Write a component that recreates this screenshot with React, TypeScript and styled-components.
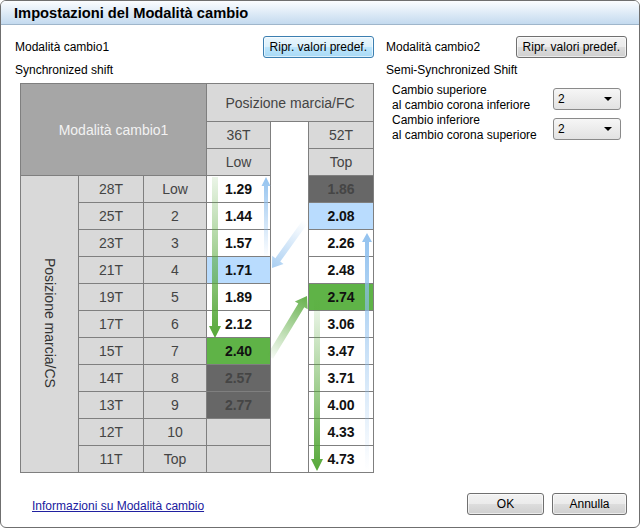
import styled, { createGlobalStyle } from 'styled-components'

type Tone = 'plain' | 'grey' | 'dark' | 'blue' | 'green' | 'head'

type Value = { v?: string; tone?: Tone }

type Row = { gear: string; idx: string; a: Value; b: Value }

const rows: Row[] = [
    { gear: '28T', idx: 'Low', a: { v: '1.29' }, b: { v: '1.86', tone: 'dark' } },
    { gear: '25T', idx: '2', a: { v: '1.44' }, b: { v: '2.08', tone: 'blue' } },
    { gear: '23T', idx: '3', a: { v: '1.57' }, b: { v: '2.26' } },
    { gear: '21T', idx: '4', a: { v: '1.71', tone: 'blue' }, b: { v: '2.48' } },
    { gear: '19T', idx: '5', a: { v: '1.89' }, b: { v: '2.74', tone: 'green' } },
    { gear: '17T', idx: '6', a: { v: '2.12' }, b: { v: '3.06' } },
    { gear: '15T', idx: '7', a: { v: '2.40', tone: 'green' }, b: { v: '3.47' } },
    { gear: '14T', idx: '8', a: { v: '2.57', tone: 'dark' }, b: { v: '3.71' } },
    { gear: '13T', idx: '9', a: { v: '2.77', tone: 'dark' }, b: { v: '4.00' } },
    { gear: '12T', idx: '10', a: { tone: 'grey' }, b: { v: '4.33' } },
    { gear: '11T', idx: 'Top', a: { tone: 'grey' }, b: { v: '4.73' } },
]

const GlobalStyle = createGlobalStyle`
    html, body {
        margin: 0;
        padding: 0;
        background: #fff;
    }
    body {
        font-family: 'Liberation Sans', Arial, sans-serif;
    }
`

const Window = styled.div`
    width: 640px;
    height: 528px;
    box-sizing: border-box;
    border: 1px solid #6f6f6f;
    border-radius: 6px;
    overflow: hidden;
    display: flex;
    flex-direction: column;
    background: #fff;
`

const TitleBar = styled.div`
    height: 23px;
    flex: none;
    display: flex;
    align-items: center;
    padding-left: 13px;
    background: linear-gradient(#fbfdff, #c4daef);
    border-bottom: 1px solid #9fb6cb;
    font-weight: bold;
    font-size: 14.7px;
    color: #000;
`

const Body = styled.div`
    flex: 1;
    display: flex;
    gap: 11px;
    padding: 11px 12px 0 13px;
`

const Panel = styled.div<{ $w: number }>`
    width: ${(p) => p.$w}px;
    display: flex;
    flex-direction: column;
`

const PanelHead = styled.div`
    display: flex;
    align-items: center;
    justify-content: space-between;
    height: 22px;
    font-size: 12px;
    padding-left: 1px;
`

const Subtitle = styled.div`
    font-size: 12px;
    line-height: 14px;
    margin-top: 5px;
    padding-left: 1px;
`

const Button = styled.button<{ $focus?: boolean; $w?: number }>`
    height: 22px;
    width: ${(p) => (p.$w ? `${p.$w}px` : 'auto')};
    padding: 0 6px;
    font-family: inherit;
    font-size: 12px;
    color: #000;
    border-radius: 3px;
    border: 1px solid ${(p) => (p.$focus ? '#3c7fb1' : '#707070')};
    background: ${(p) =>
        p.$focus
            ? 'linear-gradient(#eaf6fd 0%, #d9f0fc 50%, #bee6fd 51%, #a7d9f5 100%)'
            : 'linear-gradient(#f2f2f2 0%, #ebebeb 50%, #dddddd 51%, #cfcfcf 100%)'};
    box-shadow: inset 0 0 0 1px rgba(255, 255, 255, 0.6);
`

const TableWrap = styled.div`
    position: relative;
    margin: 6px 0 0 6px;
    width: 353px;
`

const Grid = styled.table`
    border-collapse: collapse;
    table-layout: fixed;
    width: 353px;
    font-size: 14px;
    color: #444;
`

const Col = styled.col<{ $w: number }>`
    width: ${(p) => p.$w}px;
`

const toneBg: Record<Tone, string> = {
    plain: '#ffffff',
    grey: '#d9d9d9',
    dark: '#676767',
    blue: '#b9dcfe',
    green: '#5fb347',
    head: '#a6a6a6',
}

const Cell = styled.td<{ $tone?: Tone; $h?: number }>`
    border: 1px solid #7f7f7f;
    height: ${(p) => p.$h ?? 26}px;
    padding: 0;
    text-align: center;
    vertical-align: middle;
    background: ${(p) => toneBg[p.$tone ?? 'grey']};
    color: ${(p) => (p.$tone === 'head' ? '#f2f2f2' : '#444')};
`

const ValueCell = styled(Cell)`
    font-weight: bold;
    color: ${(p) => (p.$tone === 'dark' ? '#454545' : '#111')};
`

const GapCell = styled.td`
    border: none;
    border-bottom: 1px solid #7f7f7f;
    background: #fff;
    padding: 0;
`

const VerticalLabel = styled.span`
    display: inline-block;
    writing-mode: vertical-rl;
    color: #333;
`

const Overlay = styled.svg`
    position: absolute;
    left: 0;
    top: 0;
    pointer-events: none;
`

const Options = styled.div`
    display: flex;
    flex-direction: column;
    margin-top: 6px;
    padding: 0 6px 0 7px;
`

const OptionRow = styled.div`
    display: flex;
    align-items: center;
    justify-content: space-between;
    height: 30px;
`

const OptionLabel = styled.div`
    font-size: 12px;
    line-height: 15px;
    color: #000;
`

const SelectBox = styled.div`
    width: 68px;
    height: 22px;
    margin-top: 2px;
    border: 1px solid #8a8a8a;
    border-radius: 3px;
    background: linear-gradient(#f6f6f6, #e2e2e2);
    display: flex;
    align-items: center;
    justify-content: space-between;
    padding: 0 8px 0 4px;
    box-sizing: border-box;
    font-size: 12px;
`

const Caret = styled.span`
    width: 0;
    height: 0;
    border-left: 4px solid transparent;
    border-right: 4px solid transparent;
    border-top: 4px solid #000;
`

const Footer = styled.div`
    flex: none;
    display: flex;
    align-items: center;
    justify-content: space-between;
    padding: 0 12px 12px 31px;
`

const InfoLink = styled.a`
    font-size: 12px;
    color: #2020a0;
    text-decoration: underline;
    margin-top: 4px;
`

const Actions = styled.div`
    display: flex;
    gap: 8px;
`

type ArrowProps = {
    id: string
    x1: number
    y1: number
    x2: number
    y2: number
    shaft: number
    head: number
    headLen: number
    color: string
    from: number
    to: number
}

const Arrow = ({ id, x1, y1, x2, y2, shaft, head, headLen, color, from, to }: ArrowProps) => {
    const len = Math.hypot(x2 - x1, y2 - y1)
    const ang = (Math.atan2(y2 - y1, x2 - x1) * 180) / Math.PI
    const s = shaft / 2
    const h = head / 2
    const b = len - headLen
    const pts = `0,${-s} ${b},${-s} ${b},${-h} ${len},0 ${b},${h} ${b},${s} 0,${s}`
    return (
        <g transform={`translate(${x1} ${y1}) rotate(${ang})`}>
            <defs>
                <linearGradient id={id} gradientUnits="userSpaceOnUse" x1="0" y1="0" x2={len} y2="0">
                    <stop offset="0" stopColor={color} stopOpacity={from} />
                    <stop offset="1" stopColor={color} stopOpacity={to} />
                </linearGradient>
            </defs>
            <polygon points={pts} fill={`url(#${id})`} />
        </g>
    )
}

const blue = '#8dbfee'
const green = '#55a838'

const ShiftTable = () => (
    <TableWrap>
        <Grid>
            <colgroup>
                <Col $w={58} />
                <Col $w={65} />
                <Col $w={63} />
                <Col $w={64} />
                <Col $w={38} />
                <Col $w={65} />
            </colgroup>
            <tbody>
                <tr>
                    <Cell colSpan={3} rowSpan={3} $tone="head">
                        Modalità cambio1
                    </Cell>
                    <Cell colSpan={3} $h={37}>
                        Posizione marcia/FC
                    </Cell>
                </tr>
                <tr>
                    <Cell>36T</Cell>
                    <GapCell rowSpan={13} />
                    <Cell>52T</Cell>
                </tr>
                <tr>
                    <Cell>Low</Cell>
                    <Cell>Top</Cell>
                </tr>
                {rows.map((r, i) => (
                    <tr key={r.gear}>
                        {i === 0 && (
                            <Cell rowSpan={rows.length}>
                                <VerticalLabel>Posizione marcia/CS</VerticalLabel>
                            </Cell>
                        )}
                        <Cell>{r.gear}</Cell>
                        <Cell>{r.idx}</Cell>
                        <ValueCell $tone={r.a.tone ?? 'plain'}>{r.a.v}</ValueCell>
                        <ValueCell $tone={r.b.tone ?? 'plain'}>{r.b.v}</ValueCell>
                    </tr>
                ))}
            </tbody>
        </Grid>
        <Overlay width="353" height="390" viewBox="20 83 353 390">
            <Arrow id="a1" x1={266} y1={258} x2={266} y2={177} shaft={4} head={9} headLen={9} color={blue} from={0} to={0.95} />
            <Arrow id="a2" x1={305} y1={222} x2={272} y2={268} shaft={6} head={14} headLen={10} color={blue} from={0} to={0.75} />
            <Arrow id="a3" x1={215} y1={177} x2={215} y2={338} shaft={6} head={12} headLen={12} color={green} from={0.12} to={1} />
            <Arrow id="a4" x1={270} y1={357} x2={307} y2={296} shaft={7} head={15} headLen={11} color={green} from={0.05} to={0.9} />
            <Arrow id="a5" x1={367} y1={471} x2={367} y2={233} shaft={4} head={10} headLen={9} color={blue} from={0} to={0.95} />
            <Arrow id="a6" x1={317} y1={300} x2={317} y2={471} shaft={6} head={12} headLen={12} color={green} from={0.08} to={1} />
        </Overlay>
    </TableWrap>
)

const Select = ({ value }: { value: string }) => (
    <SelectBox>
        <span>{value}</span>
        <Caret />
    </SelectBox>
)

export default function App() {
    return (
        <>
            <GlobalStyle />
            <Window>
                <TitleBar>Impostazioni del Modalità cambio</TitleBar>
                <Body>
                    <Panel $w={360}>
                        <PanelHead>
                            <span>Modalità cambio1</span>
                            <Button $focus>Ripr. valori predef.</Button>
                        </PanelHead>
                        <Subtitle>Synchronized shift</Subtitle>
                        <ShiftTable />
                    </Panel>
                    <Panel $w={242}>
                        <PanelHead>
                            <span>Modalità cambio2</span>
                            <Button>Ripr. valori predef.</Button>
                        </PanelHead>
                        <Subtitle>Semi-Synchronized Shift</Subtitle>
                        <Options>
                            <OptionRow>
                                <OptionLabel>
                                    Cambio superiore
                                    <br />
                                    al cambio corona inferiore
                                </OptionLabel>
                                <Select value="2" />
                            </OptionRow>
                            <OptionRow>
                                <OptionLabel>
                                    Cambio inferiore
                                    <br />
                                    al cambio corona superiore
                                </OptionLabel>
                                <Select value="2" />
                            </OptionRow>
                        </Options>
                    </Panel>
                </Body>
                <Footer>
                    <InfoLink href="#">Informazioni su Modalità cambio</InfoLink>
                    <Actions>
                        <Button $w={77}>OK</Button>
                        <Button $w={75}>Annulla</Button>
                    </Actions>
                </Footer>
            </Window>
        </>
    )
}
